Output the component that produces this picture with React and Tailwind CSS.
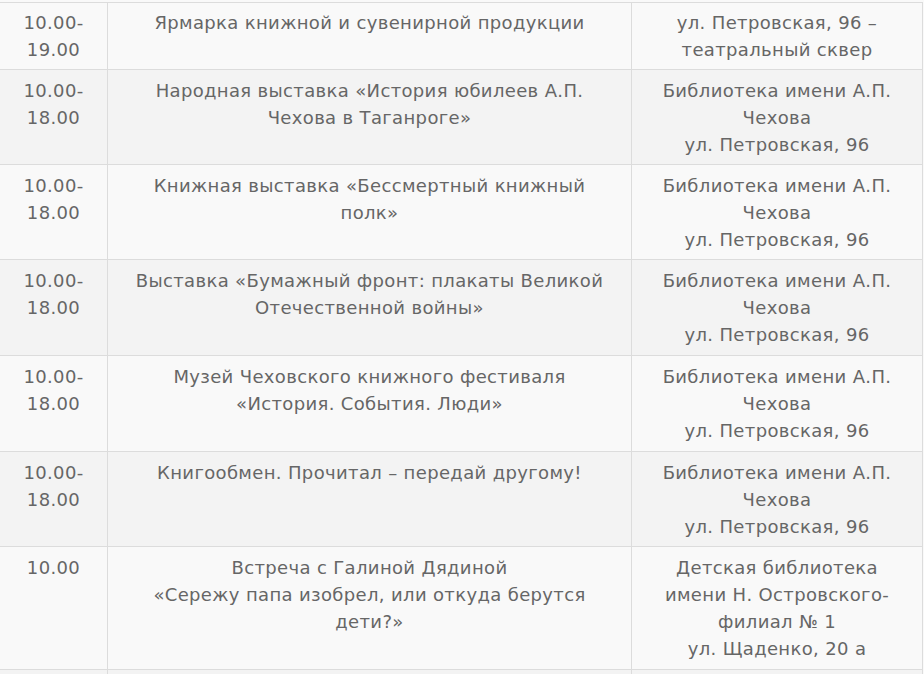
const rows = [
  {
    time: ["10.00-", "19.00"],
    title: ["Ярмарка книжной и сувенирной продукции"],
    place: ["ул. Петровская, 96 –", "театральный сквер"],
    pad: "pt-[6px] pb-[6px]",
  },
  {
    time: ["10.00-", "18.00"],
    title: ["Народная выставка «История юбилеев А.П.", "Чехова в Таганроге»"],
    place: ["Библиотека имени А.П.", "Чехова", "ул. Петровская, 96"],
    pad: "pt-[7px] pb-[6px]",
  },
  {
    time: ["10.00-", "18.00"],
    title: ["Книжная выставка «Бессмертный книжный", "полк»"],
    place: ["Библиотека имени А.П.", "Чехова", "ул. Петровская, 96"],
    pad: "pt-[7px] pb-[6px]",
  },
  {
    time: ["10.00-", "18.00"],
    title: ["Выставка «Бумажный фронт: плакаты Великой", "Отечественной войны»"],
    place: ["Библиотека имени А.П.", "Чехова", "ул. Петровская, 96"],
    pad: "pt-[7px] pb-[7px]",
  },
  {
    time: ["10.00-", "18.00"],
    title: ["Музей Чеховского книжного фестиваля", "«История. События. Люди»"],
    place: ["Библиотека имени А.П.", "Чехова", "ул. Петровская, 96"],
    pad: "pt-[7px] pb-[7px]",
  },
  {
    time: ["10.00-", "18.00"],
    title: ["Книгообмен. Прочитал – передай другому!"],
    place: ["Библиотека имени А.П.", "Чехова", "ул. Петровская, 96"],
    pad: "pt-[7px] pb-[6px]",
  },
  {
    time: ["10.00"],
    title: ["Встреча с Галиной Дядиной", "«Сережу папа изобрел, или откуда берутся", "дети?»"],
    place: ["Детская библиотека", "имени Н. Островского-", "филиал № 1", "ул. Щаденко, 20 а"],
    pad: "pt-[7px] pb-[7px]",
  },
]

function Lines({ items }) {
  return items.map((line, i) => (
    <span key={i} className="block whitespace-nowrap">
      {line}
    </span>
  ))
}

export default function App() {
  return (
    <div className="h-[674px] w-[924px] overflow-hidden bg-[#f9f9f9] pt-[2px] font-['DejaVu_Sans',Verdana,sans-serif] text-[18px] leading-[27px] tracking-[0.35px] text-[#666]">
      <div className="w-[923px] border-r border-[#dcdcdc]">
        {rows.map((row, i) => (
          <div
            key={i}
            className={`grid grid-cols-[107px_524px_1fr] border-t border-[#dcdcdc] ${i % 2 ? "bg-[#f3f3f3]" : "bg-[#f9f9f9]"}`}
          >
            <div className={`px-2 text-center ${row.pad}`}>
              <Lines items={row.time} />
            </div>
            <div className={`border-l border-[#dcdcdc] px-2 text-center ${row.pad}`}>
              <Lines items={row.title} />
            </div>
            <div className={`border-l border-[#dcdcdc] px-2 text-center ${row.pad}`}>
              <Lines items={row.place} />
            </div>
          </div>
        ))}
        <div className="grid h-[20px] grid-cols-[107px_524px_1fr] border-t border-[#dcdcdc] bg-[#f3f3f3]">
          <div />
          <div className="border-l border-[#dcdcdc]" />
          <div className="border-l border-[#dcdcdc]" />
        </div>
      </div>
    </div>
  )
}
